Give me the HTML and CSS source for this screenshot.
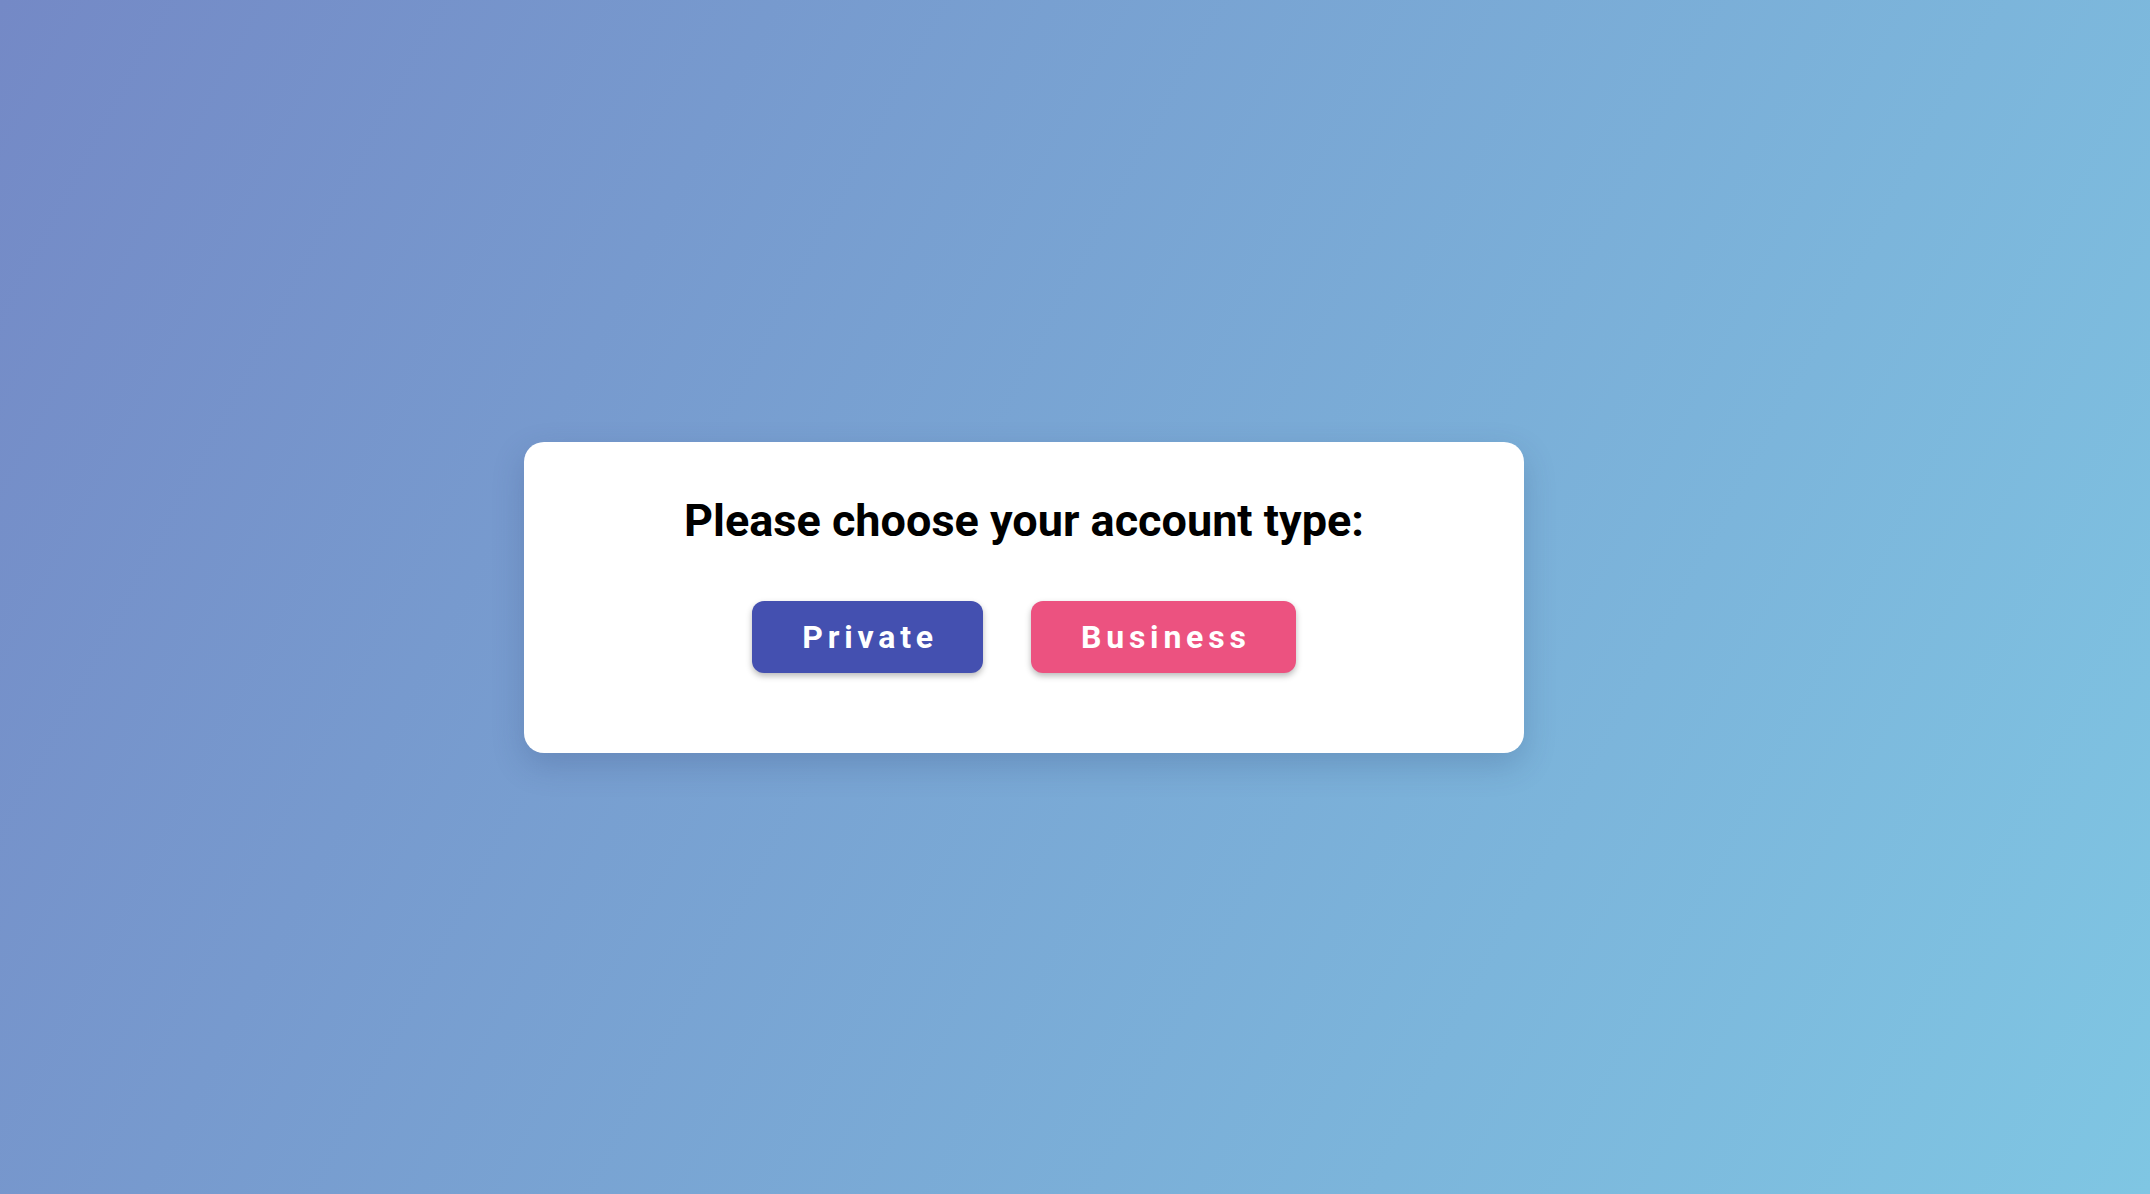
FILE: index.html
```html
<!DOCTYPE html>
<html lang="en">
<head>
<meta charset="utf-8">
<title>Account type</title>
<link rel="stylesheet" href="styles.css">
</head>
<body>
<main class="stage">
  <section class="card">
    <h1 class="title">Please choose your account type:</h1>
    <div class="actions">
      <button class="btn btn-private" type="button">Private</button>
      <button class="btn btn-business" type="button">Business</button>
    </div>
  </section>
</main>
</body>
</html>
```

FILE: styles.css
```css
* { box-sizing: border-box; }
html, body { margin: 0; padding: 0; height: 100%; }
body {
  font-family: Roboto, "Liberation Sans", Arial, sans-serif;
  background: linear-gradient(118deg, #7489c6 0%, #7fc6e3 100%);
  min-height: 100vh;
}
.stage {
  min-height: 100vh;
  display: flex;
  align-items: center;
  justify-content: center;
  padding-right: 102px;
}
.card {
  width: 1000px;
  background: #fff;
  border-radius: 20px;
  box-shadow: 0 12px 32px rgba(40, 60, 110, 0.22);
  padding: 52px 40px 80px;
  display: flex;
  flex-direction: column;
  align-items: center;
}
.title {
  margin: 0 0 54px;
  font-size: 45px;
  font-weight: 700;
  line-height: normal;
  color: #000;
  text-align: center;
}
.actions {
  display: flex;
  gap: 48px;
}
.btn {
  border: 0;
  font-family: Roboto, "Liberation Sans", Arial, sans-serif;
  font-size: 32px;
  font-weight: 700;
  letter-spacing: 4.8px;
  line-height: normal;
  color: #fff;
  padding: 17px 45px 17px 50px;
  border-radius: 12px;
  box-shadow: 0 3px 6px rgba(0, 0, 0, 0.28);
  cursor: pointer;
}
.btn-private { background: #4450b0; }
.btn-business { background: #ec5280; }
```
